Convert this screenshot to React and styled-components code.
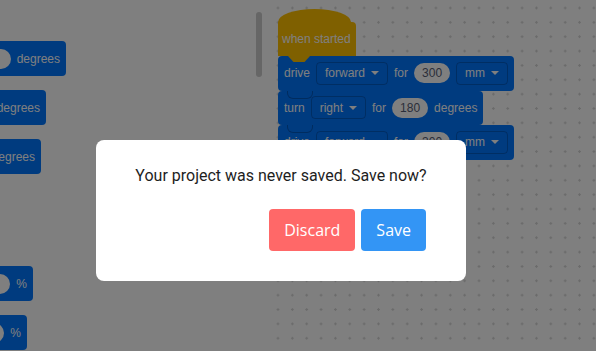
import React from 'react'
import styled, { createGlobalStyle } from 'styled-components';

const GlobalStyle = createGlobalStyle`
html, body {
  margin: 0;
  padding: 0;
}
body {
  width: 596px;
  height: 351px;
  overflow: hidden;
  font-family: "Liberation Sans", Arial, sans-serif;
}
* { box-sizing: border-box; }
`;

const BLUE = '#0076ff';
const GOLD = '#ffc000';

const Screen = styled.div`
display: flex;
width: 596px;
height: 351px;
background: #fff;
overflow: hidden;
`;

const Palette = styled.aside`
display: flex;
flex: none;
width: 266px;
height: 100%;
`;

const PaletteList = styled.div`
display: flex;
flex: 1;
flex-direction: column;
align-items: flex-start;
padding-top: 41px;
gap: 14px;
`;

const ScrollTrack = styled.div`
width: 10px;
padding-top: 12px;
`;

const ScrollThumb = styled.div`
width: 6px;
height: 65px;
border-radius: 3px;
background: #cccccc;
`;

const PaletteBlock = styled.div`
display: flex;
flex: none;
align-items: center;
justify-content: flex-end;
gap: 6px;
width: ${({ $w }) => $w}px;
height: 35px;
margin-top: ${({ $space }) => $space || 0}px;
padding-right: 6px;
background: ${BLUE};
border-radius: 0 4px 4px 0;
color: #fff;
font-size: 12px;
white-space: nowrap;
overflow: hidden;
& > * { flex: none; }
`;

const Workspace = styled.main`
display: flex;
flex: 1;
flex-direction: column;
align-items: flex-start;
padding: 9px 0 0 12px;
background-color: #fff;
background-image: radial-gradient(circle, #d6d6d6 1px, transparent 1.4px);
background-size: 14.37px 14.37px;
background-position: 4.8px 0.8px;
`;

const HatCap = styled.div`
width: 73px;
height: 13px;
background: ${GOLD};
border-radius: 50% 50% 0 0 / 100% 100% 0 0;
`;

const HatBody = styled.div`
position: relative;
z-index: 2;
display: flex;
align-items: center;
width: 78px;
height: 34px;
padding-left: 4px;
background: ${GOLD};
border-radius: 0 4px 0 0;
color: #fff;
font-size: 12px;
white-space: nowrap;
&::after {
  content: '';
  position: absolute;
  left: 10px;
  top: 100%;
  width: 22px;
  height: 6px;
  background: ${GOLD};
  clip-path: polygon(0 0, 100% 0, 75% 100%, 25% 100%);
}
`;

const Block = styled.div`
position: relative;
z-index: 1;
display: flex;
align-items: center;
gap: 6px;
height: 34.5px;
padding: 0 6px;
background: ${BLUE};
border-radius: 4px;
color: #fff;
font-size: 12px;
white-space: nowrap;
&::before {
  content: '';
  display: ${({ $notch }) => ($notch ? 'block' : 'none')};
  position: absolute;
  left: 9px;
  top: 0;
  width: 24px;
  height: 7px;
  border: 1px solid rgba(0, 0, 0, 0.25);
  border-top: none;
  border-radius: 0 0 6px 6px;
}
`;

const Label = styled.span`
color: #fff;
`;

const Dropdown = styled.span`
display: flex;
align-items: center;
gap: 6px;
height: 23px;
padding: 0 8px 0 8px;
border: 1px solid rgba(0, 0, 0, 0.22);
border-radius: 4px;
color: #fff;
`;

const Caret = styled.span`
width: 0;
height: 0;
border-left: 4px solid transparent;
border-right: 4px solid transparent;
border-top: 4px solid #fff;
`;

const Pill = styled.span`
display: flex;
align-items: center;
justify-content: center;
width: ${({ $w }) => $w || 36}px;
height: 20px;
border-radius: 10px;
background: #fff;
color: #575e75;
`;

const Overlay = styled.div`
position: fixed;
inset: 0;
z-index: 20;
display: flex;
align-items: flex-start;
justify-content: flex-start;
padding: 140px 0 0 96px;
background-color: rgba(0, 0, 0, 0.5);
`;

const Modal = styled.div`
display: flex;
flex-direction: column;
width: 370px;
height: 141px;
padding: 24px 40px 30px;
background: #fff;
border-radius: 8px;
`;

const Message = styled.p`
margin: 0 -20px;
font-family: Roboto, "Liberation Sans", sans-serif;
font-size: 16px;
line-height: 24px;
color: #1e1e1e;
text-align: center;
`;

const Actions = styled.div`
display: flex;
justify-content: flex-end;
gap: 6px;
margin-top: 21px;
`;

const Button = styled.button`
height: 42px;
padding: 0 15px;
border: none;
border-radius: 4px;
background: ${({ $kind }) => ($kind === 'danger' ? '#ff6868' : '#3395f5')};
color: #fff;
font-family: "Open Sans", "Liberation Sans", sans-serif;
font-size: 16px;
cursor: pointer;
`;

const DriveBlock = ({ notch }) => (
  <Block $notch={notch}>
    <Label>drive</Label>
    <Dropdown>forward<Caret /></Dropdown>
    <Label>for</Label>
    <Pill>300</Pill>
    <Dropdown>mm<Caret /></Dropdown>
  </Block>
);

export default function App() {
  return (
    <>
      <GlobalStyle />
      <Screen>
        <Palette>
          <PaletteList>
            <PaletteBlock $w={66}>
              <Label>turn</Label>
              <Pill>90</Pill>
              <Label>degrees</Label>
            </PaletteBlock>
            <PaletteBlock $w={46}>
              <Label>degrees</Label>
            </PaletteBlock>
            <PaletteBlock $w={41}>
              <Label>degrees</Label>
            </PaletteBlock>
            <PaletteBlock $w={33} $space={78}>
              <Pill>50</Pill>
              <Label>%</Label>
            </PaletteBlock>
            <PaletteBlock $w={27}>
              <Pill>50</Pill>
              <Label>%</Label>
            </PaletteBlock>
          </PaletteList>
          <ScrollTrack>
            <ScrollThumb />
          </ScrollTrack>
        </Palette>
        <Workspace>
          <HatCap />
          <HatBody>when started</HatBody>
          <DriveBlock />
          <Block $notch>
            <Label>turn</Label>
            <Dropdown>right<Caret /></Dropdown>
            <Label>for</Label>
            <Pill>180</Pill>
            <Label>degrees</Label>
          </Block>
          <DriveBlock notch />
        </Workspace>
      </Screen>
      <Overlay>
        <Modal>
          <Message>Your project was never saved. Save now?</Message>
          <Actions>
            <Button $kind="danger">Discard</Button>
            <Button>Save</Button>
          </Actions>
        </Modal>
      </Overlay>
    </>
  );
}
